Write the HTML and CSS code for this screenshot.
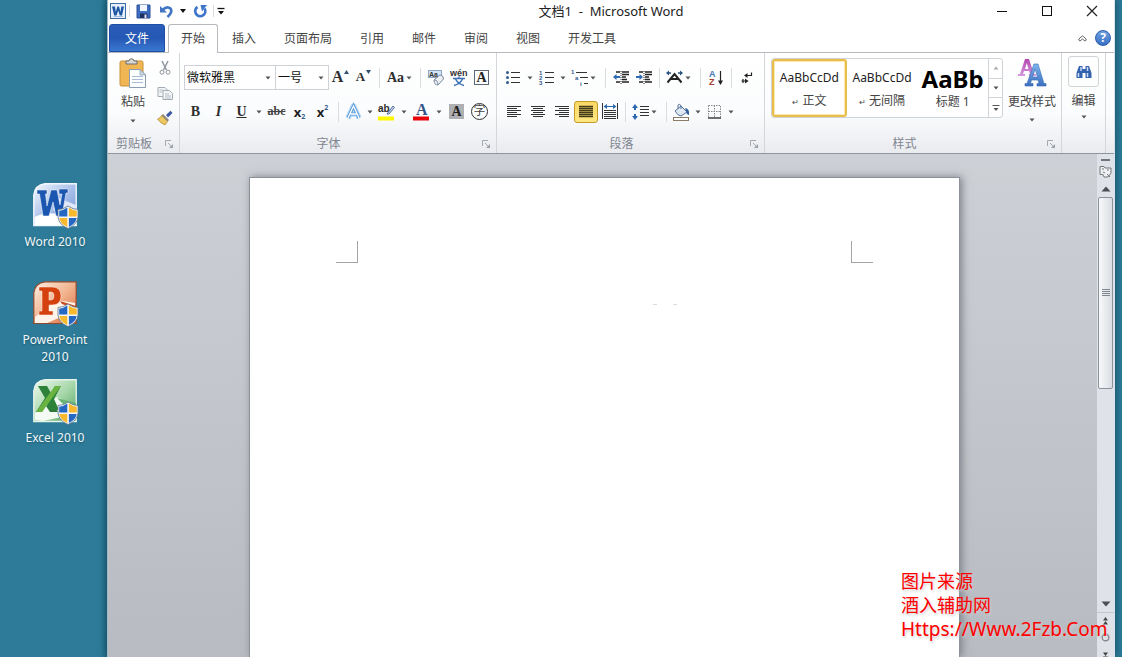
FILE: index.html
```html
<!DOCTYPE html>
<html lang="zh-CN">
<head>
<meta charset="utf-8">
<title>文档1 - Microsoft Word</title>
<link rel="stylesheet" href="styles.css">
</head>
<body>
<svg class="defs" width="0" height="0" aria-hidden="true">
  <defs>
    <linearGradient id="gW" x1="0" y1="0" x2="1" y2="1"><stop offset="0" stop-color="#f4f8fe"/><stop offset=".5" stop-color="#a9c0ea"/><stop offset="1" stop-color="#6f92d4"/></linearGradient>
    <linearGradient id="gP" x1="0" y1="0" x2="1" y2="1"><stop offset="0" stop-color="#fdeee2"/><stop offset=".5" stop-color="#f2b48f"/><stop offset="1" stop-color="#d9683a"/></linearGradient>
    <linearGradient id="gX" x1="0" y1="0" x2="1" y2="1"><stop offset="0" stop-color="#eef8ee"/><stop offset=".5" stop-color="#a9d8ac"/><stop offset="1" stop-color="#4fa25b"/></linearGradient>
    <linearGradient id="gA" x1="0" y1="0" x2="0" y2="1"><stop offset="0" stop-color="#7fb6ee"/><stop offset="1" stop-color="#3a6fc0"/></linearGradient>
    <linearGradient id="gM" x1="0" y1="0" x2="0" y2="1"><stop offset="0" stop-color="#b545b0"/><stop offset="1" stop-color="#d59be0"/></linearGradient>
    <symbol id="shield" viewBox="0 0 22 24">
      <path d="M11 1 Q6 4.500 1 4.500 V12 Q2 20 11 23.500 Q20 20 21 12 V4.500 Q16 4.500 11 1Z" fill="#f4f7fa" stroke="#5a748c" stroke-width=".8"/>
      <path d="M10.300 2.500 Q6.500 5.400 2.200 5.700 V11.500 H10.300Z M11.900 12.900 H19.700 Q18.600 18.700 11.900 22Z" fill="#2468c4"/>
      <path d="M11.900 2.500 Q15.500 5.400 19.800 5.700 V11.500 H11.900Z M2.300 12.900 H10.300 V22 Q3.500 19 2.300 12.900Z" fill="#f8b92c"/>
    </symbol>
    <symbol id="caret" viewBox="0 0 6 4"><path d="M0.500 0.500 H5.500 L3 3.500Z" fill="#555"/></symbol>
    <symbol id="launch" viewBox="0 0 9 9"><path d="M.5 6 V.5 H6" fill="none" stroke="#a3a9b1"/><path d="M3 3 L6.500 6.500" stroke="#a3a9b1"/><path d="M8 4 V8 H4Z" fill="#9aa1aa"/></symbol>
  </defs>
</svg>

<nav class="desktop" aria-label="桌面">
  <a class="shortcut" href="#word">
    <svg width="46" height="46" viewBox="0 0 46 46" aria-hidden="true"><path d="M12 .8 H43.200 V42.500 H.8 V12 Q2 2 12 .8Z" fill="url(#gW)" stroke="#f3f8fd" stroke-width="1.400"/><path d="M1.500 42 V34 Q20 24 43 40 V42Z" fill="#fff"/><path d="M23 14 L43 22 V36 L20 27Z" fill="#dfe9fa"/><path d="M4 7 H14 V11 H12.500 L14 23 L18 7 H24 L27 22 L29 11 H26 V6 H35 V10 H33 L29 33 H23 L20 19 L16 33 H10 L6.500 11 H4Z" fill="#1b57b0" stroke="#fff" stroke-width=".5"/><use href="#shield" x="24" y="22" width="22" height="24"/></svg>
    <span>Word 2010</span>
  </a>
  <a class="shortcut" href="#powerpoint">
    <svg width="46" height="46" viewBox="0 0 46 46" aria-hidden="true"><path d="M12 .8 H43.200 V42.500 H.8 V12 Q2 2 12 .8Z" fill="url(#gP)" stroke="#8f4a30" stroke-width="1.200"/><path d="M2 42 V36 L24 19 L42 22 V30 L14 42Z" fill="#fff3ea"/><path d="M27 20 L43 25 V28 L29 23Z" fill="#cb4a1e"/><path fill-rule="evenodd" d="M6 6 H19 Q28 6 28 15 Q28 24 19 24 H16 V30 H20 V34 H6 V30 H9 V10 H6Z M16 11 V19 H18 Q21 19 21 15 Q21 11 18 11Z" fill="#d5400f" stroke="#fff0e4" stroke-width=".5"/><use href="#shield" x="24" y="22" width="22" height="24"/></svg>
    <span>PowerPoint 2010</span>
  </a>
  <a class="shortcut" href="#excel">
    <svg width="46" height="46" viewBox="0 0 46 46" aria-hidden="true"><path d="M12 .8 H43.200 V42.500 H.8 V12 Q2 2 12 .8Z" fill="url(#gX)" stroke="#e6f4ea" stroke-width="1.400"/><path d="M2 41 V34 L24 18 L43 27 V35 L10 42Z" fill="#f4fbf4"/><path d="M24 19 L43 24 V30 L30 25Z" fill="#69b673"/><path d="M18 23 L25 33 H17 L13 27Z" fill="#2c7a38"/><path d="M5 7 H14 L18 14 L22 7 H28 L21 20 L26 31 H17 L14 25 L9 33 H3 L12 19Z" fill="#2d8239"/><path d="M22 7 H28 L9 33 H3Z" fill="#69b440"/><use href="#shield" x="24" y="22" width="22" height="24"/></svg>
    <span>Excel 2010</span>
  </a>
</nav>

<main class="window">
  <header class="titlebar">
    <div class="quick">
      <svg width="16" height="16" viewBox="0 0 16 16" aria-hidden="true"><rect x=".5" y=".5" width="15" height="15" fill="#e8f1fa" stroke="#3a6da5"/><path d="M3.500 13.500 H13" stroke="#9fbbe0"/><path d="M2 3.500 H5 L5.800 9 L7.300 3.500 H9 L10.500 9 L11.300 3.500 H14 L12 12.500 H9.800 L8.200 7.500 L6.500 12.500 H4.200Z" fill="#1d57a4"/></svg>
      <i class="sep small"></i>
      <button aria-label="保存"><svg width="15" height="15" viewBox="0 0 15 15"><path d="M1 1 H14 V14 H1Z" fill="#3d6cc0" stroke="#2b4f98"/><path d="M4 1 H11 V7 H4Z" fill="#f2f7ff"/><path d="M4 9.500 H11.500 V14 H4Z" fill="#1f3163"/><path d="M8.500 10.500 H10.500 V14 H8.500Z" fill="#dfe8f8"/></svg></button>
      <button aria-label="撤消"><svg width="15" height="15" viewBox="0 0 15 15"><path d="M3.500 6 Q8 1.500 11.500 4.500 Q14 8 8.500 13" fill="none" stroke="#4274c4" stroke-width="2.600"/><path d="M1 2 V8.500 H8Z" fill="#4274c4"/></svg></button>
      <button aria-label="撤消列表" class="tiny"><svg width="6" height="4" viewBox="0 0 6 4"><path d="M0 0 H6 L3 4Z" fill="#111"/></svg></button>
      <button aria-label="重复"><svg width="15" height="15" viewBox="0 0 15 15"><path d="M4.500 3 A5 5 0 1 0 11.500 4.500" fill="none" stroke="#3f76cc" stroke-width="2.800"/><path d="M7.500 1 H14 L9 7.500Z" fill="#3f76cc"/></svg></button>
      <i class="sep small"></i>
      <button aria-label="自定义快速访问工具栏" class="tiny"><svg width="8" height="8" viewBox="0 0 8 8"><path d="M0.500 1.500 H7.500" stroke="#111" stroke-width="1.300"/><path d="M1 4 H7 L4 7.500Z" fill="#111"/></svg></button>
    </div>
    <h1>文档1&nbsp; -&nbsp; Microsoft Word</h1>
    <div class="controls">
      <button aria-label="最小化"><svg width="12" height="12" viewBox="0 0 12 12"><path d="M1 6.500 H11" stroke="#111"/></svg></button>
      <button aria-label="最大化"><svg width="12" height="12" viewBox="0 0 12 12"><rect x="1.500" y="1.500" width="9" height="9" fill="none" stroke="#111"/></svg></button>
      <button aria-label="关闭"><svg width="12" height="12" viewBox="0 0 12 12"><path d="M1 1 L11 11 M11 1 L1 11" stroke="#222" stroke-width="1.200"/></svg></button>
    </div>
  </header>

  <nav class="tabs" aria-label="功能区">
    <button class="file">文件</button>
    <button class="tab active">开始</button>
    <button class="tab">插入</button>
    <button class="tab">页面布局</button>
    <button class="tab">引用</button>
    <button class="tab">邮件</button>
    <button class="tab">审阅</button>
    <button class="tab">视图</button>
    <button class="tab">开发工具</button>
    <div class="tabtools">
      <button aria-label="折叠功能区"><svg width="9" height="7" viewBox="0 0 9 7"><path d="M4.500 .8 L8.200 4 Q8.200 6 7 6 L4.500 4 L2 6 Q.8 6 .8 4Z" fill="#fff" stroke="#666"/></svg></button>
      <button aria-label="帮助" class="help">?</button>
    </div>
  </nav>

  <section class="ribbon">
    <div class="group clipboard">
      <div class="clip">
        <button class="big">
          <svg width="28" height="30" viewBox="0 0 28 30" aria-hidden="true"><rect x="1" y="3" width="23" height="25" rx="1.500" fill="#f0b654" stroke="#c98e35"/><path d="M7 6 V3 H10 Q10 .8 12.500 .8 Q15 .8 15 3 H18 V6Z" fill="#d8d8d8" stroke="#6d6d6d"/><path d="M10.500 11.500 H21 L26.500 17 V29.500 H10.500Z" fill="#fbfdff" stroke="#8b9bb0"/><path d="M21 11.500 V17 H26.500Z" fill="#cbd8e8" stroke="#8b9bb0" stroke-width=".7"/><path d="M13 18.500 H24 M13 21.500 H24 M13 24.500 H24" stroke="#a9bcd6"/></svg>
          <span>粘贴</span>
          <svg class="caret"><use href="#caret"/></svg>
        </button>
        <div class="clipside">
          <button aria-label="剪切"><svg width="16" height="16" viewBox="0 0 16 16" fill="none" stroke="#8f959c"><path d="M5 1 L9.500 10 M11 1 L6.500 10" stroke-width="1.500"/><circle cx="5" cy="12.200" r="2"/><circle cx="11" cy="12.200" r="2"/></svg></button>
          <button aria-label="复制"><svg width="16" height="16" viewBox="0 0 16 16" fill="#f3f5f7" stroke="#a3abb5"><path d="M1 2.500 H8 L10.500 5 V11.500 H1Z"/><path d="M6 5.500 H12.500 L15.500 8.500 V14.500 H6Z"/><path d="M2.500 5 H6 M2.500 7 H5 M8 9 H12 M8 11 H14 M8 13 H14" stroke="#b6bec8"/></svg></button>
          <button aria-label="格式刷"><svg width="16" height="16" viewBox="0 0 16 16"><path d="M9 5 L13.500 .8 L15.500 3 L11 7.500Z" fill="#3c58a5"/><path d="M6 4 L12 10 L10.500 11.500 L4.500 5.500Z" fill="#8d8a7c"/><path d="M4.500 5.500 L10.500 11.500 L8 15 Q3 13 .5 9 Q3 8.500 4.500 5.500Z" fill="#eec861" stroke="#a6843a" stroke-width=".7"/></svg></button>
        </div>
      </div>
      <div class="foot"><span>剪贴板</span><button aria-label="剪贴板选项"><svg width="9" height="9"><use href="#launch"/></svg></button></div>
    </div>

    <div class="group fonts">
      <div class="row">
        <label class="combo wide"><select aria-label="字体"><option>微软雅黑</option></select><svg class="caret"><use href="#caret"/></svg></label>
        <label class="combo"><select aria-label="字号"><option>一号</option></select><svg class="caret"><use href="#caret"/></svg></label>
        <button class="t grow" aria-label="增大字号">A<svg width="5" height="4" viewBox="0 0 5 4"><path d="M0 4 L2.500 0 L5 4Z" fill="#33506f"/></svg></button>
        <button class="t shrink" aria-label="缩小字号">A<svg width="5" height="4" viewBox="0 0 5 4"><path d="M0 0 H5 L2.500 4Z" fill="#33506f"/></svg></button>
        <i class="sep"></i>
        <button class="t case" aria-label="更改大小写">Aa<svg class="caret"><use href="#caret"/></svg></button>
        <i class="sep"></i>
        <button class="t" aria-label="清除格式"><svg width="18" height="18" viewBox="0 0 18 18"><rect x="1.500" y="1.500" width="13" height="7" fill="#d3e4f7" stroke="#8ba5c4"/><text x="2" y="8" font-family="Liberation Sans" font-size="7" font-weight="bold" fill="#333">Aa</text><path d="M7 11 L13 6 Q16.500 6 16.500 10 L11 16 Q7 16 7 11Z" fill="#edf1f6" stroke="#7e8ca0"/><path d="M7 11 Q11 11 11 16" fill="none" stroke="#7e8ca0"/></svg></button>
        <button class="t" aria-label="拼音指南"><svg width="18" height="18" viewBox="0 0 18 18"><text x="0" y="7" font-family="Liberation Sans" font-size="9" font-weight="bold" fill="#333">wén</text><path d="M3 9.500 H15 M9 7.500 V9.500 M5.500 10 Q8 15 14 16.500 M12.500 10 Q10 15 4 16.500" fill="none" stroke="#3c70b5" stroke-width="1.500"/></svg></button>
        <button class="t" aria-label="字符边框"><span class="boxed">A</span></button>
      </div>
      <div class="row">
        <button class="t b">B</button>
        <button class="t it">I</button>
        <button class="t wide36"><span class="ico u">U</span><svg class="caret"><use href="#caret"/></svg></button>
        <button class="t strike">abc</button>
        <button class="t x">x<sub>2</sub></button>
        <button class="t x">x<sup>2</sup></button>
        <i class="sep"></i>
        <button class="t split" aria-label="文本效果"><svg class="ico" width="23" height="20" viewBox="0 0 23 20"><path d="M6 16 L11.500 4 L17 16 M8 12 H15" fill="none" stroke="#b9dbf8" stroke-width="5.500" stroke-linejoin="round"/><path d="M6 16 L11.500 4 L17 16 M8 12 H15" fill="none" stroke="#5c9ddb" stroke-width="3.200"/><path d="M6 16 L11.500 4 L17 16 M8 12 H15" fill="none" stroke="#fff" stroke-width="1.300"/></svg><svg class="caret"><use href="#caret"/></svg></button>
        <button class="t wide36" aria-label="突出显示"><svg class="ico" width="23" height="20" viewBox="0 0 23 20"><text x="3" y="10" font-family="Liberation Sans" font-size="10" font-weight="bold" fill="#2b2b2b">ab</text><path d="M12 12 L18 4 L19.500 5.500 L14 12Z" fill="#c5d5ea" stroke="#56739c"/><rect x="3" y="14.500" width="16" height="4" fill="#fdf900"/></svg><svg class="caret"><use href="#caret"/></svg></button>
        <button class="t wide36" aria-label="字体颜色"><svg class="ico" width="23" height="20" viewBox="0 0 23 20"><text x="6" y="12.500" font-family="Liberation Serif" font-size="16" font-weight="bold" fill="#32538a">A</text><rect x="3" y="14.500" width="16" height="4" fill="#e8060c"/></svg><svg class="caret"><use href="#caret"/></svg></button>
        <button class="t" aria-label="字符底纹"><span class="boxed shade">A</span></button>
        <button class="t" aria-label="带圈字符"><span class="circled">字</span></button>
      </div>
      <div class="foot"><span>字体</span><button aria-label="字体选项"><svg width="9" height="9"><use href="#launch"/></svg></button></div>
    </div>

    <div class="group paras">
      <div class="row">
        <button class="t split" aria-label="项目符号"><svg class="ico" width="23" height="18" viewBox="0 0 23 18"><g fill="#315b8c"><circle cx="5.500" cy="3.500" r="1.500"/><circle cx="5.500" cy="8.500" r="1.500"/><circle cx="5.500" cy="13.500" r="1.500"/></g><path d="M9 3.500 H18 M9 8.500 H18 M9 13.500 H18" stroke="#333"/></svg><svg class="caret"><use href="#caret"/></svg></button>
        <button class="t split" aria-label="编号"><svg class="ico" width="23" height="18" viewBox="0 0 23 18"><g font-family="Liberation Sans" font-size="6" font-weight="bold" fill="#315b8c"><text x="4" y="6">1</text><text x="4" y="11">2</text><text x="4" y="16">3</text></g><path d="M10 3.500 H19 M10 8.500 H19 M10 13.500 H19" stroke="#333"/></svg><svg class="caret"><use href="#caret"/></svg></button>
        <button class="t split" aria-label="多级列表"><svg class="ico" width="23" height="18" viewBox="0 0 23 18"><g font-family="Liberation Sans" font-size="6" font-weight="bold" fill="#315b8c"><text x="3" y="5">1</text><text x="7" y="11">a</text><text x="12" y="17">i</text></g><path d="M8 3.500 H19 M12 8.500 H20 M16 14.500 H20" stroke="#333"/></svg><svg class="caret near"><use href="#caret"/></svg></button>
        <i class="sep"></i>
        <button class="t" aria-label="减少缩进"><svg width="18" height="16" viewBox="0 0 18 16"><path d="M4 2 H8 M10 2 H17 M10 4.500 H17 M10 7 H14 M10 9.500 H15 M4 12 H8 M10 12 H17" stroke="#222" stroke-width="1.600"/><path d="M9 1 V15" stroke="#222" stroke-dasharray="1 1"/><path d="M1 7 L4.500 4 V6 H8 V8 H4.500 V10Z" fill="#2d69b0"/></svg></button>
        <button class="t" aria-label="增加缩进"><svg width="18" height="16" viewBox="0 0 18 16"><path d="M4 2 H8 M10 2 H17 M10 4.500 H17 M10 7 H14 M10 9.500 H15 M4 12 H8 M10 12 H17" stroke="#222" stroke-width="1.600"/><path d="M9 1 V15" stroke="#222" stroke-dasharray="1 1"/><path d="M8 7 L4.500 4 V6 H1 V8 H4.500 V10Z" fill="#2d69b0"/></svg></button>
        <i class="sep"></i>
        <button class="t split" aria-label="中文版式"><svg class="ico" width="23" height="18" viewBox="0 0 23 18"><path d="M4.500 13.500 L11.500 5 L18.500 13.500 M7.500 10 H15.500" fill="none" stroke="#222" stroke-width="2"/><path d="M3 4 L6 1.500 V3.300 H8 V4.700 H6 V6.500Z M20 4 L17 1.500 V3.300 H15 V4.700 H17 V6.500Z" fill="#28517c"/></svg><svg class="caret near"><use href="#caret"/></svg></button>
        <i class="sep"></i>
        <button class="t" aria-label="排序"><svg width="16" height="18" viewBox="0 0 16 18"><g font-family="Liberation Sans" font-size="9" font-weight="bold"><text x="1" y="8" fill="#4276b5">A</text><text x="1" y="16" fill="#a8402f">Z</text></g><path d="M12.500 2 V15" stroke="#222" stroke-width="1.200"/><path d="M10 11.500 H15 L12.500 16Z" fill="#222"/></svg></button>
        <i class="sep"></i>
        <button class="t" aria-label="显示编辑标记"><svg width="14" height="14" viewBox="0 0 14 14"><path d="M11.500 1.500 V4.500 H6" fill="none" stroke="#222" stroke-width="1.200"/><path d="M4 4.500 L7.500 2 V7Z M8.500 10 L5 7.500 V12.500Z" fill="#222"/><path d="M1.500 10 H6 M3 8 V12" stroke="#222" stroke-width="1.200"/></svg></button>
      </div>
      <div class="row">
        <button class="t al" aria-label="左对齐"><svg width="16" height="13" viewBox="0 0 16 13"><path d="M1 1.500 H15 M1 3.500 H11 M1 5.500 H15 M1 7.500 H11 M1 9.500 H15 M1 11.500 H11" stroke="#333" stroke-width="1.200"/></svg></button>
        <button class="t al" aria-label="居中"><svg width="16" height="13" viewBox="0 0 16 13"><path d="M1 1.500 H15 M3 3.500 H13 M1 5.500 H15 M3 7.500 H13 M1 9.500 H15 M3 11.500 H13" stroke="#333" stroke-width="1.200"/></svg></button>
        <button class="t al" aria-label="右对齐"><svg width="16" height="13" viewBox="0 0 16 13"><path d="M1 1.500 H15 M5 3.500 H15 M1 5.500 H15 M5 7.500 H15 M1 9.500 H15 M5 11.500 H15" stroke="#333" stroke-width="1.200"/></svg></button>
        <button class="t al on" aria-label="两端对齐"><svg width="16" height="13" viewBox="0 0 16 13"><path d="M1 1.500 H15 M1 3.500 H15 M1 5.500 H15 M1 7.500 H15 M1 9.500 H15 M1 11.500 H15" stroke="#433a18" stroke-width="1.300"/></svg></button>
        <button class="t" aria-label="分散对齐"><svg width="16" height="17" viewBox="0 0 16 17"><path d="M.5 0 V16 M15.500 0 V16" stroke="#333"/><path d="M1.500 3.500 L5 1 V3 H11 V1 L14.500 3.500 L11 6 V4 H5 V6Z" fill="#2d69b0"/><path d="M2 7.500 H14 M2 9.500 H14 M2 11.500 H14 M2 13.500 H14 M2 15.500 H14" stroke="#333" stroke-width="1.200"/></svg></button>
        <i class="sep"></i>
        <button class="t split" aria-label="行距"><svg class="ico" width="23" height="18" viewBox="0 0 23 18"><path d="M6 1 L9 5 H7 V7 H5 V5 H3Z M6 17 L9 13 H7 V11 H5 V13 H3Z" fill="#2d69b0"/><path d="M11 3.500 H20 M11 6.500 H20 M11 9.500 H20 M11 12.500 H20" stroke="#333"/></svg><svg class="caret near"><use href="#caret"/></svg></button>
        <i class="sep"></i>
        <button class="t split" aria-label="底纹"><svg class="ico" width="23" height="18" viewBox="0 0 23 18"><path d="M5 8 L11 3 L17 9 L11 13 Q8 13 5 8Z" fill="#dfe9f4" stroke="#56739c"/><path d="M8 6 V2 Q10 0 11 3 V6" fill="none" stroke="#56739c"/><path d="M15 5 Q20 6 19 12 Q16 11 16 8Z" fill="#2f5f9c"/><rect x="3.500" y="14.500" width="15" height="3" fill="#fff" stroke="#8a7c66"/></svg><svg class="caret"><use href="#caret"/></svg></button>
        <button class="t split" aria-label="边框"><svg class="ico" width="23" height="18" viewBox="0 0 23 18"><path d="M5.500 2.500 H17.500 V14.500 M5.500 2.500 V14.500 M11.500 2.500 V14.500 M5.500 8.500 H17.500" fill="none" stroke="#8a8a8a" stroke-dasharray="1.500 1"/><path d="M5 15 H18" stroke="#222" stroke-width="1.300"/></svg><svg class="caret"><use href="#caret"/></svg></button>
      </div>
      <div class="foot"><span>段落</span><button aria-label="段落选项"><svg width="9" height="9"><use href="#launch"/></svg></button></div>
    </div>

    <div class="group styles">
      <div class="stylerow">
        <div class="gallery">
          <button class="style on"><b>AaBbCcDd</b><span><small>↵</small> 正文</span></button>
          <button class="style"><b>AaBbCcDd</b><span><small>↵</small> 无间隔</span></button>
          <button class="style heading"><b>AaBb</b><span>标题 1</span></button>
          <div class="scroller">
            <button aria-label="上一行"><svg class="caret" viewBox="0 0 6 4"><path d="M.5 3.500 H5.500 L3 .5Z" fill="#aaa"/></svg></button>
            <button aria-label="下一行"><svg class="caret"><use href="#caret"/></svg></button>
            <button aria-label="更多样式"><svg width="8" height="8" viewBox="0 0 8 8"><path d="M.5 1.500 H7.500" stroke="#555"/><path d="M1.500 4 H6.500 L4 7Z" fill="#555"/></svg></button>
          </div>
        </div>
        <button class="big change">
          <svg width="30" height="30" viewBox="0 0 30 30" aria-hidden="true"><path fill-rule="evenodd" d="M1 18 V16 H3 L8 1 H12 L17 16 H19 V18 H12 V16 H13 L12 13 H7 L6 16 H8 V18Z M8 11 H11.500 L9.800 5Z" fill="url(#gM)"/><path fill-rule="evenodd" d="M8 28 V25.500 H10 L17 6 H21 L27 25.500 H29 V28 H20 V25.500 H22 L21 22 H14.500 L13.500 25.500 H16 V28Z M15.500 19 H20.500 L18.200 11Z" fill="url(#gA)" stroke="#3769b2" stroke-width=".6"/></svg>
          <span>更改样式</span>
          <svg class="caret"><use href="#caret"/></svg>
        </button>
      </div>
      <div class="foot"><span>样式</span><button aria-label="样式选项"><svg width="9" height="9"><use href="#launch"/></svg></button></div>
    </div>

    <div class="group edit">
      <button class="big">
        <span class="frame"><svg width="16" height="14" viewBox="0 0 16 14" aria-hidden="true"><path d="M3 1 H6.500 V4 H9.500 V1 H13 L15.500 8 V13 H9.500 V8 H6.500 V13 H.5 V8Z" fill="#3562ac"/><path d="M2.500 8 V12 M11.500 8 V12 M5 2 V6 M11.500 2 V6" stroke="#c8dcf6" stroke-width="1.500"/></svg></span>
        <span>编辑</span>
        <svg class="caret"><use href="#caret"/></svg>
      </button>
    </div>
  </section>

  <section class="workspace">
    <div class="canvas">
      <article class="page" aria-label="文档页面">
        <div class="corners"><i class="corner left"></i><i class="corner right"></i></div>
        <div class="specks"><i></i><i></i></div>
      </article>
    </div>
    <aside class="scrollbar">
      <div class="splitter"></div>
      <button class="ruler" aria-label="标尺"><svg width="13" height="13" viewBox="0 0 13 13" fill="#eef0f3" stroke="#777"><path d="M1 1.500 H5 L6 3 H12 V8 L9 12 H5 L4 9.500 H1Z"/><path d="M3 4 H5 M4 7 L6 8 M8 5 H10 M8 9 L11 12"/></svg></button>
      <button aria-label="向上滚动"><svg width="10" height="6" viewBox="0 0 10 6"><path d="M0.500 5.500 L5 .5 L9.500 5.500Z" fill="#4b4f55"/></svg></button>
      <div class="track"><div class="thumb"><i></i><i></i><i></i><i></i></div></div>
      <button aria-label="向下滚动" class="down"><svg width="10" height="6" viewBox="0 0 10 6"><path d="M0.500 .5 H9.500 L5 5.500Z" fill="#4b4f55"/></svg></button>
      <button aria-label="前一页"><svg width="7" height="8" viewBox="0 0 7 8"><path d="M1 3.500 L3.500 0 L6 3.500Z M1 7.500 L3.500 4 L6 7.500Z" fill="#444"/></svg></button>
      <button aria-label="选择浏览对象"><svg width="9" height="9" viewBox="0 0 9 9"><circle cx="4.500" cy="4.500" r="3.300" fill="#e1e3e8" stroke="#85898f" stroke-width="1.400"/></svg></button>
      <button aria-label="下一页" class="next"><svg width="7" height="8" viewBox="0 0 7 8"><path d="M1 .5 H6 L3.500 4Z M1 4.500 H6 L3.500 8Z" fill="#444"/></svg></button>
    </aside>
  </section>
</main>
<p class="source">图片来源<br>酒入辅助网<br><span>Https://Www.2Fzb.Com</span></p>
</body>
</html>
```

FILE: styles.css
```css
* { box-sizing: border-box; }
body {
  margin: 0;
  height: 100vh;
  display: flex;
  overflow: hidden;
  position: relative;
  background: #2d7b98;
  font: 12px/16px "Noto Sans", "Noto Sans CJK SC", sans-serif;
  color: #444;
}
button {
  border: 0;
  padding: 0;
  background: none;
  font: inherit;
  color: inherit;
  display: flex;
  align-items: center;
  justify-content: center;
}
svg { display: block; flex: none; }
.defs { position: absolute; }
.caret { width: 6px; height: 4px; }

/* Desktop */
.desktop {
  flex: 0 0 107px;
  padding: 183px 12px 0 15px;
  background: linear-gradient(90deg, #2d7b98 94%, #256a84);
}
.shortcut {
  display: flex;
  flex-direction: column;
  align-items: center;
  gap: 4px;
  min-height: 98px;
  color: #f2f8fa;
  text-align: center;
  text-decoration: none;
  line-height: 17px;
  text-shadow: 0 1px 2px #1c566c;
}
.shortcut svg { margin-left: 2px; }

/* Window */
.window {
  flex: 1;
  min-width: 0;
  margin-right: 7px;
  display: flex;
  flex-direction: column;
  border-left: 1px solid #9fbac6;
  border-right: 1px solid #d9e4ea;
  background: #fff;
  box-shadow: 0 0 8px #12485e;
}
.titlebar {
  display: grid;
  grid-template-columns: 1fr auto 1fr;
  align-items: center;
  height: 22px;
}
.titlebar h1 {
  margin: 0;
  font-size: 13px;
  font-weight: 400;
  color: #222;
}
.quick { display: flex; align-items: center; gap: 3px; padding-left: 2px; }
.quick button { width: 20px; height: 20px; }
.quick .tiny { width: 8px; }
.controls { display: flex; justify-content: flex-end; }
.controls button { width: 45px; height: 22px; }
.sep { width: 8px; height: 20px; flex: none; }
.sep::before {
  content: "";
  display: block;
  height: 100%;
  width: 1px;
  margin: 0 auto;
  background: #d9dce1;
}
.sep.small { width: 1px; height: 12px; background: #b9bdc3; }

.tabs {
  display: flex;
  align-items: flex-end;
  height: 31px;
  padding-left: 1px;
  border-bottom: 1px solid #b6babf;
}
.tabs > button { height: 28px; padding: 2px 14px 0; }
.tabs .file {
  width: 56px;
  margin-right: 3px;
  border-radius: 3px 3px 0 0;
  border: 1px solid #1f4fa5;
  background: linear-gradient(#2a5db8, #2558b4 50%, #3a78d2);
  color: #fff;
}
.tabs .active {
  height: 29px;
  width: 50px;
  padding: 0;
  margin-bottom: -1px;
  border: 1px solid #b6babf;
  border-bottom: 0;
  border-radius: 3px 3px 0 0;
  background: #fff;
}
.tabtools {
  display: flex;
  align-items: center;
  gap: 8px;
  margin-left: auto;
  padding-right: 3px;
  height: 28px;
}
.tabtools .help {
  width: 16px;
  height: 16px;
  border-radius: 50%;
  border: 1px solid #2b5fae;
  background: linear-gradient(#6e9fe0, #3a70c4);
  color: #fff;
  font-weight: 700;
}

/* Ribbon */
.ribbon {
  display: flex;
  border-bottom: 1px solid #8f959c;
  background: linear-gradient(#fff, #fbfcfd 60%, #e9ebef);
}
.group {
  display: flex;
  flex-direction: column;
  gap: 9px;
  padding: 12px 3px 0 4px;
  border-right: 1px solid #d3d6db;
}
.clipboard { flex: 0 0 72px; }
.fonts { flex: 0 0 317px; }
.paras { flex: 0 0 268px; }
.styles { flex: 0 0 297px; padding-left: 6px; }
.edit { flex: 0 0 44px; padding: 3px 0 0; }
.row { display: flex; align-items: center; height: 25px; }
.foot {
  display: grid;
  grid-template-columns: 1fr 9px;
  gap: 9px;
  align-items: center;
  height: 18px;
  margin-top: auto;
  padding-right: 2px;
  color: #7f8590;
}
.foot span { text-align: center; white-space: nowrap; }
.foot button { width: 9px; height: 9px; }

.clip { display: flex; gap: 3px; margin-top: -7px; height: 68px; }
.big { flex-direction: column; justify-content: flex-start; }
.clip .big { width: 42px; gap: 6px; }
.clipside { display: flex; flex-direction: column; gap: 9px; padding-top: 2px; }
.clip .caret { margin-top: 3px; }

.combo {
  display: flex;
  align-items: center;
  width: 54px;
  height: 25px;
  padding-right: 4px;
  border: 1px solid #cfd3d8;
  background: #fff;
}
.combo.wide { width: 91px; border-right: 0; }
.combo select {
  flex: 1;
  min-width: 0;
  appearance: none;
  border: 0;
  padding: 0 2px;
  background: none;
  font: inherit;
  color: #111;
}
.t { width: 23px; height: 22px; }
.t .ico { width: 23px; text-align: center; }
.split { width: 33px; }
.wide36 { width: 35px; gap: 3px; }
.split, .wide36 { justify-content: flex-start; }
.near { margin-left: -1px; }
.split .caret:not(.near) { margin-left: 2px; }
.grow, .shrink, .case, .b, .it, .u {
  font-family: "Liberation Serif", serif;
  font-weight: 700;
  color: #2e2e2e;
}
.grow, .shrink { align-items: flex-start; gap: 1px; line-height: 20px; }
.grow svg, .shrink svg { margin-top: 3px; }
.grow { font-size: 16px; }
.shrink { font-size: 13px; }
.case { width: 33px; gap: 2px; font-size: 14px; }
.b, .it, .u { font-size: 14px; }
.it { font-style: italic; }
.u { text-decoration: underline; }
.strike {
  font: 700 12px "Liberation Serif", serif;
  text-decoration: line-through;
}
.x { font-weight: 700; font-size: 13px; color: #222; }
.x sub, .x sup { font-size: 7px; line-height: 8px; color: #315b8c; }
.x sub { align-self: flex-end; margin-bottom: 2px; }
.x sup { align-self: flex-start; margin-top: 3px; }
.boxed {
  width: 15px;
  height: 15px;
  border: 1px solid #5b6778;
  font: 700 14px/13px "Liberation Serif", serif;
  color: #222;
}
.shade { border-color: #aeb0b3; background: #aeb0b3; }
.circled {
  width: 17px;
  height: 17px;
  border: 1px solid #333;
  border-radius: 50%;
  line-height: 14px;
}
.paras { padding-left: 5px; }
.al { width: 24px; }
.al.on {
  border: 1px solid #c29b29;
  border-radius: 3px;
  background: linear-gradient(#fbd865, #ffe682);
}

.stylerow { display: flex; gap: 3px; margin-top: -7px; }
.gallery {
  display: flex;
  width: 232px;
  height: 60px;
  border: 1px solid #d0d4d9;
  border-radius: 3px;
  background: #fff;
}
.style {
  flex: 1;
  min-width: 0;
  flex-direction: column;
  overflow: hidden;
  gap: 5px;
  padding-top: 2px;
  white-space: nowrap;
}
.style b { font-weight: 400; line-height: 20px; color: #222; }
.style small { font-size: 8px; }
.style.on { border: 2px solid #e8bd4c; border-radius: 3px; box-shadow: inset 0 0 0 1px #fbe9ae; }
.heading b { font-size: 24px; font-weight: 700; color: #000; }
.scroller { width: 14px; display: flex; flex-direction: column; border-left: 1px solid #d0d4d9; }
.scroller button { flex: 1; width: 100%; }
.scroller button + button { border-top: 1px solid #d0d4d9; }
.change { width: 52px; gap: 6px; white-space: nowrap; }
.change .caret { margin-top: 2px; }
.edit .big { gap: 6px; }
.edit .caret { margin-top: 0; }
.frame {
  display: flex;
  align-items: center;
  justify-content: center;
  width: 31px;
  height: 31px;
  border: 1px solid #d0d4d9;
  border-radius: 3px;
}

/* Document area */
.workspace {
  flex: 1;
  min-height: 0;
  display: flex;
  background: linear-gradient(#cdd0d5, #b8bbc1);
}
.canvas {
  flex: 1;
  min-width: 0;
  display: flex;
  justify-content: center;
  padding: 23px 0 0 4px;
}
.page {
  flex: 0 1 711px;
  padding: 63px 86px 0;
  border: 1px solid #8d9198;
  border-bottom: 0;
  background: #fff;
  box-shadow: 2px 0 8px #7d8188;
}
.corners { display: flex; justify-content: space-between; }
.corner { width: 22px; height: 22px; border-bottom: 1px solid #a4a4a4; }
.corner.left { border-right: 1px solid #a4a4a4; }
.corner.right { border-left: 1px solid #a4a4a4; }
.specks { display: flex; justify-content: center; gap: 16px; padding: 41px 0 0 120px; }
.specks i { width: 4px; height: 1px; background: #dcdcdc; }

.scrollbar {
  flex: 0 0 17px;
  display: flex;
  flex-direction: column;
  align-items: center;
  padding-top: 5px;
  background: #dfe2e8;
}
.scrollbar button { flex: none; width: 16px; height: 16px; }
.scrollbar .ruler { height: 20px; }
.scrollbar .next { height: 12px; overflow: hidden; align-items: flex-start; padding-top: 7px; }
.splitter { width: 9px; height: 2px; background: #70757c; }
.track { flex: 1; align-self: stretch; padding: 0 1px; }
.scrollbar .down { width: 100%; height: 17px; border-bottom: 1px solid #c3c6cb; }
.thumb {
  display: flex;
  flex-direction: column;
  align-items: center;
  justify-content: center;
  gap: 1px;
  height: 48%;
  border: 1px solid #8d9299;
  border-radius: 2px;
  background: linear-gradient(90deg, #f8f9fb, #d9dde3);
}
.thumb i { width: 8px; height: 1px; background: #81868e; }

.source {
  position: absolute;
  left: 901px;
  bottom: 16px;
  margin: 0;
  font-size: 18px;
  line-height: 24px;
  color: #f00;
  text-shadow: 1px 2px 3px #ccc;
  white-space: nowrap;
}
.source span { font-size: 19px; }
```
